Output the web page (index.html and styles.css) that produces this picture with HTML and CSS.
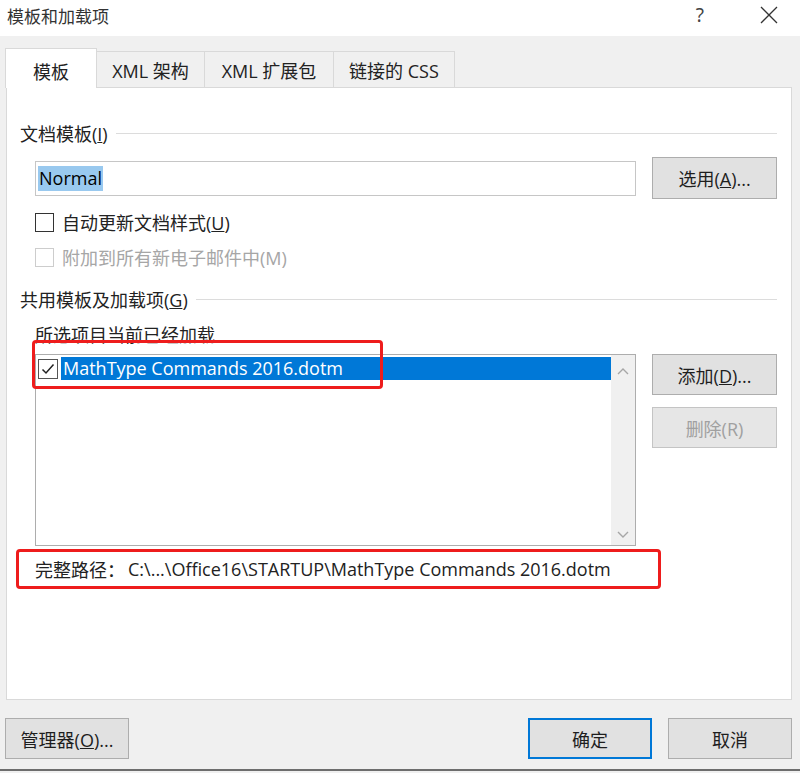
FILE: index.html
```html
<!DOCTYPE html>
<html lang="zh-CN">
<head>
<meta charset="utf-8">
<title>模板和加载项</title>
<link rel="stylesheet" href="styles.css">
</head>
<body>
<div class="dialog">
  <div class="titlebar">
    <span class="title">模板和加载项</span>
    <span class="help">?</span>
    <svg class="close" width="18" height="18" viewBox="0 0 18 18"><path d="M1 1 L17 17 M17 1 L1 17" stroke="#333" stroke-width="1.3" fill="none"/></svg>
  </div>
  <div class="tabs">
    <div class="tab active">模板</div>
    <div class="tab">XML 架构</div>
    <div class="tab">XML 扩展包</div>
    <div class="tab">链接的 CSS</div>
  </div>
  <div class="panel">
    <div class="group-head g1"><span>文档模板(<u>I</u>)</span><i class="rule"></i></div>
    <div class="row input-row">
      <div class="textbox"><span class="sel">Normal</span></div>
      <button class="btn side">选用(<u>A</u>)...</button>
    </div>
    <label class="check c1"><span class="box"></span><span>自动更新文档样式(<u>U</u>)</span></label>
    <label class="check c2 disabled"><span class="box"></span><span>附加到所有新电子邮件中(M)</span></label>
    <div class="group-head g2"><span>共用模板及加载项(<u>G</u>)</span><i class="rule"></i></div>
    <div class="sublabel">所选项目当前已经加载</div>
    <div class="row list-row">
      <div class="listbox">
        <div class="items">
          <div class="item">
            <span class="box checked"><svg width="16" height="16" viewBox="0 0 16 16"><path d="M2.5 8.5 L6 12 L13.5 3.5" stroke="#222" stroke-width="1.5" fill="none"/></svg></span>
            <span class="item-text">MathType Commands 2016.dotm</span>
          </div>
        </div>
        <div class="scrollbar">
          <svg width="14" height="10" viewBox="0 0 14 10"><path d="M2 7 L7 2 L12 7" stroke="#a6a6a6" stroke-width="1.4" fill="none"/></svg>
          <svg width="14" height="10" viewBox="0 0 14 10"><path d="M2 3 L7 8 L12 3" stroke="#a6a6a6" stroke-width="1.4" fill="none"/></svg>
        </div>
        <div class="mark mark1"></div>
      </div>
      <div class="side-col">
        <button class="btn side">添加(<u>D</u>)...</button>
        <button class="btn side disabled">删除(R)</button>
      </div>
    </div>
    <div class="pathbox"><span class="path-label">完整路径：</span><span>C:\...\Office16\STARTUP\MathType Commands 2016.dotm</span></div>
  </div>
  <div class="footer">
    <button class="btn foot">管理器(<u>O</u>)...</button>
    <span class="spacer"></span>
    <button class="btn foot default">确定</button>
    <button class="btn foot">取消</button>
  </div>
</div>
</body>
</html>
```
FILE: styles.css
```css
* { box-sizing: border-box; }
html, body { margin: 0; padding: 0; }
body {
  width: 800px;
  height: 773px;
  background: #f0f0f0;
  font-family: "Segoe UI", "Open Sans", "Noto Sans CJK SC", sans-serif;
  font-size: 18px;
  color: #1e1e1e;
  overflow: hidden;
}
.dialog {
  width: 800px;
  height: 771px;
  border-bottom: 2px solid #6d6d6d;
  display: flex;
  flex-direction: column;
}
.titlebar {
  height: 36px;
  flex: none;
  background: #fff;
  display: flex;
  align-items: center;
  padding: 0 0 6px 7px;
  color: #333;
}
.title { flex: 1; font-family: "Noto Sans CJK SC", sans-serif; font-size: 17px; }
.help { font-family: "Noto Sans", sans-serif; font-size: 19px; margin-right: 56px; color: #444; }
.close { margin-right: 22px; }
.tabs {
  display: flex;
  flex: none;
  padding: 12px 0 0 5px;
  height: 52px;
  align-items: flex-end;
  position: relative;
  z-index: 2;
}
.tab {
  height: 36px;
  background: #f0f0f0;
  border: 1px solid #d9d9d9;
  border-bottom: none;
  border-left: none;
  display: flex;
  align-items: center;
  justify-content: center;
  font-size: 18px;
  color: #222;
  margin-bottom: 1px;
}
.tab:nth-child(2) { width: 108px; }
.tab:nth-child(3) { width: 129px; }
.tab:nth-child(4) { width: 121px; }
.tab.active {
  width: 92px;
  height: 40px;
  background: #fff;
  border-left: 1px solid #d9d9d9;
  margin-bottom: 0;
  padding-top: 4px;
}
.panel {
  margin: -1px 8px 0 6px;
  height: 613px;
  flex: none;
  background: #fff;
  border: 1px solid #d9d9d9;
  padding: 0 14px 0 13px;
  display: flex;
  flex-direction: column;
}
.group-head {
  display: flex;
  align-items: center;
  height: 24px;
  color: #222;
  white-space: nowrap;
}
.group-head .rule {
  flex: 1;
  height: 1px;
  background: #dcdcdc;
  margin-left: 8px;
}
.g1 { margin-top: 33px; }
.g2 { margin-top: 18px; }
.row { display: flex; gap: 16px; margin-left: 15px; }
.input-row { margin-top: 12px; height: 42px; align-items: center; }
.textbox {
  width: 602px;
  height: 35px;
  border: 1px solid #c6c6c6;
  padding: 3px 2px;
  display: flex;
  align-items: center;
}
.sel { background: #99c9ef; color: #000; padding: 0 1px; line-height: 25px; }
.btn {
  font: inherit;
  color: #1e1e1e;
  background: #e1e1e1;
  border: 1px solid #adadad;
  width: 125px;
  height: 42px;
  padding: 0;
}
.btn.disabled { color: #a0a0a0; border-color: #c4c4c4; background: #e6e6e6; }
.check {
  display: flex;
  align-items: center;
  gap: 8px;
  margin-left: 15px;
  height: 24px;
  color: #222;
}
.c1 { margin-top: 11px; }
.c2 { margin-top: 11px; }
.check.disabled { color: #a6a6a6; }
.box {
  width: 19px;
  height: 19px;
  border: 1px solid #333;
  background: #fff;
  display: inline-flex;
  align-items: center;
  justify-content: center;
  flex: none;
}
.check.disabled .box { border-color: #cdcdcd; }
.sublabel { margin: 12px 0 0 15px; height: 24px; line-height: 24px; color: #222; }
.list-row { margin-top: 7px; }
.listbox {
  width: 602px;
  height: 192px;
  border: 1px solid #adadad;
  display: flex;
  position: relative;
}
.items { flex: 1; padding: 2px 0 0 2px; }
.item { display: flex; align-items: center; height: 23px; }
.item .box.checked { border-color: #555; width: 20px; height: 20px; }
.item-text {
  background: #0078d7;
  color: #fff;
  flex: 1;
  height: 23px;
  line-height: 22px;
  margin-left: 3px;
  padding-left: 2px;
  font-size: 18px;
}
.scrollbar {
  width: 24px;
  background: #f0f0f0;
  display: flex;
  flex-direction: column;
  justify-content: space-between;
  align-items: center;
  padding: 12px 0 6px;
}
.mark {
  position: absolute;
  border: 3px solid #ee1c1c;
  border-radius: 4px;
}
.mark1 { left: -4px; top: -15px; width: 351px; height: 49px; }
.side-col { display: flex; flex-direction: column; gap: 12px; }
.side-col .btn { height: 41px; }
.pathbox {
  margin: 3px 0 0 -4px;
  width: 645px;
  height: 40px;
  border: 3px solid #ee1c1c;
  border-radius: 4px;
  display: flex;
  align-items: center;
  padding-left: 16px;
  color: #222;
  white-space: nowrap;
}
.path-label { margin-right: 3px; }
.footer {
  display: flex;
  padding: 18px 8px 0 5px;
  gap: 16px;
}
.spacer { flex: 1; }
.btn.foot { width: 124px; height: 41px; }
.btn.default { border: 2px solid #0078d7; }
```
